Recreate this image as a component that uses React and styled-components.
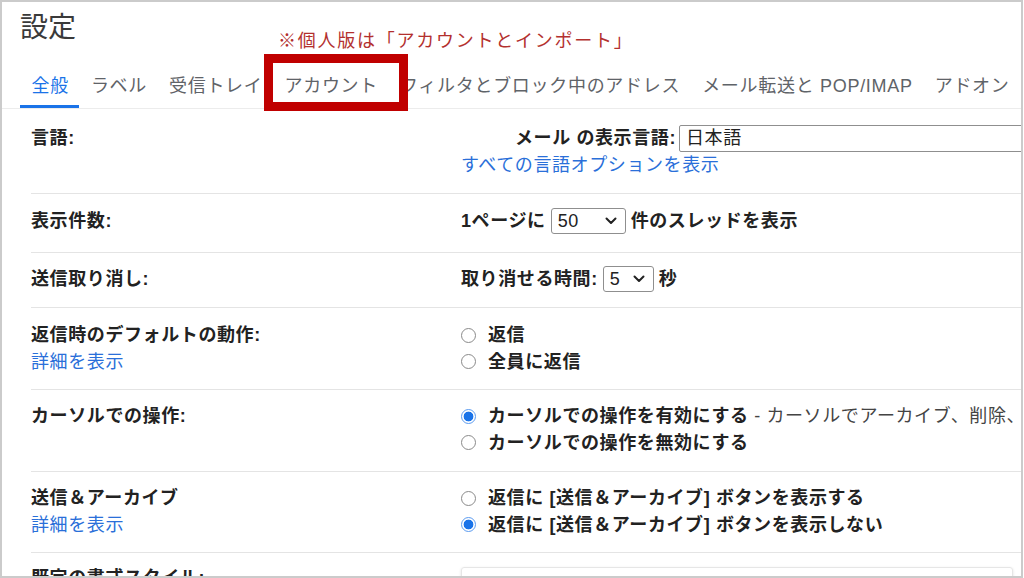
import React from "react";
import styled, { createGlobalStyle } from "styled-components";

const GlobalStyle = createGlobalStyle`
  html, body {
    margin: 0;
    background: #fff;
  }
  body {
    font-family: "Liberation Sans", "Noto Sans CJK JP", sans-serif;
    color: #222;
  }
`;

const Frame = styled.div`
  position: relative;
  width: 1023px;
  height: 578px;
  box-sizing: border-box;
  border: 2px solid #cbcbcb;
  overflow: hidden;
  background: #fff;
`;

const Title = styled.h1`
  margin: 0;
  height: 60px;
  box-sizing: border-box;
  padding: 9px 0 0 18px;
  font-size: 28px;
  line-height: 34px;
  font-weight: 400;
  color: #3a3a3a;
`;

const TabBar = styled.nav`
  display: flex;
  padding-left: 18px;
  border-bottom: 1px solid #ececec;
  white-space: nowrap;
`;

const Tab = styled.div`
  flex-shrink: 0;
  display: flex;
  align-items: center;
  height: 46px;
  box-sizing: border-box;
  padding: 0 10.5px 0 11.5px;
  border-bottom: 3px solid ${(p) => (p.$active ? "#1a73e8" : "transparent")};
  font-size: 18px;
  letter-spacing: 0.7px;
  color: ${(p) => (p.$active ? "#1a73e8" : "#5f6368")};
`;

const Settings = styled.div`
  margin-left: 29px;
`;

const Row = styled.div`
  display: grid;
  grid-template-columns: 430px 1fr;
  padding: ${(p) => p.$top}px 0 ${(p) => p.$bottom}px;
  border-bottom: 1px solid #e4e4e4;
  font-size: 18px;
  line-height: 26.5px;
  letter-spacing: 0.6px;
  white-space: nowrap;
`;

const Label = styled.div`
  font-weight: 700;
  color: #222;
`;

const Value = styled.div`
  font-weight: 700;
  color: #222;
`;

const Link = styled.div`
  font-weight: 400;
  color: #2a6fd9;
`;

const Line = styled.div`
  display: flex;
  align-items: center;
  gap: ${(p) => p.$gap || 0}px;
  height: ${(p) => p.$h || 26.5}px;
`;

const LangLabel = styled.span`
  width: 215px;
  margin-right: 3px;
  text-align: right;
`;

const TextBox = styled.div`
  width: 420px;
  height: 27px;
  box-sizing: border-box;
  border: 1px solid #8f8f8f;
  border-radius: 2px;
  padding: 0 6px;
  font-weight: 400;
  line-height: 25px;
  flex-shrink: 0;
`;

const SelectBox = styled.div`
  display: inline-flex;
  align-items: center;
  justify-content: space-between;
  width: ${(p) => p.$w}px;
  height: 26px;
  box-sizing: border-box;
  border: 1px solid #8f8f8f;
  border-radius: 3px;
  padding: 0 8px 0 6px;
  font-weight: 400;
  color: #222;
  svg {
    display: block;
  }
`;

const Radio = styled.span`
  flex-shrink: 0;
  width: 15px;
  height: 15px;
  box-sizing: border-box;
  border-radius: 50%;
  margin-right: 12px;
  border: ${(p) => (p.$checked ? "1.5px solid #5b9bf0" : "1px solid #8a8a8a")};
  background: ${(p) =>
    p.$checked
      ? "radial-gradient(circle, #1a73e8 0 4.6px, #fff 5.2px)"
      : "#fff"};
`;

const Note = styled.span`
  font-weight: 400;
  color: #444;
`;

const Preview = styled.div`
  width: 550px;
  height: 40px;
  margin-top: 2px;
  border: 1px solid #e6e6e6;
  border-radius: 3px;
  box-shadow: 0 1px 3px rgba(0, 0, 0, 0.12);
`;

const Annotation = styled.div`
  position: absolute;
  left: 276px;
  top: 27px;
  font-size: 18px;
  line-height: 24px;
  letter-spacing: 1.75px;
  color: #b3302e;
  white-space: nowrap;
`;

const Highlight = styled.div`
  position: absolute;
  left: 262px;
  top: 52px;
  width: 144px;
  height: 57px;
  box-sizing: border-box;
  border: 9px solid #c00000;
`;

const Chevron = () => (
  <svg width="12" height="8" viewBox="0 0 12 8">
    <path d="M1.5 1.5 L6 6 L10.5 1.5" fill="none" stroke="#222" strokeWidth="2" strokeLinecap="round" strokeLinejoin="round" />
  </svg>
);

const Select = ({ value, width }) => (
  <SelectBox $w={width}>
    <span>{value}</span>
    <Chevron />
  </SelectBox>
);

const Option = ({ checked, children }) => (
  <Line>
    <Radio $checked={checked} />
    <span>{children}</span>
  </Line>
);

const tabs = [
  "全般",
  "ラベル",
  "受信トレイ",
  "アカウント",
  "フィルタとブロック中のアドレス",
  "メール転送と POP/IMAP",
  "アドオン",
];

export default function App() {
  return (
    <>
      <GlobalStyle />
      <Frame>
        <Title>設定</Title>
        <TabBar>
          {tabs.map((t, i) => (
            <Tab key={t} $active={i === 0}>
              {t}
            </Tab>
          ))}
        </TabBar>

        <Settings>
          <Row $top={16} $bottom={14}>
            <Label>言語:</Label>
            <Value>
              <Line $h={27}>
                <LangLabel>メール の表示言語:</LangLabel>
                <TextBox>日本語</TextBox>
              </Line>
              <Link>すべての言語オプションを表示</Link>
            </Value>
          </Row>

          <Row $top={14} $bottom={18}>
            <Label>表示件数:</Label>
            <Value>
              <Line $gap={5}>
                <span>1ページに</span>
                <Select value="50" width={75} />
                <span>件のスレッドを表示</span>
              </Line>
            </Value>
          </Row>

          <Row $top={13} $bottom={14.5}>
            <Label>送信取り消し:</Label>
            <Value>
              <Line $gap={5}>
                <span>取り消せる時間:</span>
                <Select value="5" width={51} />
                <span>秒</span>
              </Line>
            </Value>
          </Row>

          <Row $top={14} $bottom={14}>
            <Label>
              返信時のデフォルトの動作:
              <Link>詳細を表示</Link>
            </Label>
            <Value>
              <Option>返信</Option>
              <Option>全員に返信</Option>
            </Value>
          </Row>

          <Row $top={13} $bottom={15}>
            <Label>カーソルでの操作:</Label>
            <Value>
              <Option checked>
                カーソルでの操作を有効にする
                <Note> - カーソルでアーカイブ、削除、既読にする、ミュートにする操作を行えます</Note>
              </Option>
              <Option>カーソルでの操作を無効にする</Option>
            </Value>
          </Row>

          <Row $top={13} $bottom={14}>
            <Label>
              送信＆アーカイブ
              <Link>詳細を表示</Link>
            </Label>
            <Value>
              <Option>返信に [送信＆アーカイブ] ボタンを表示する</Option>
              <Option checked>返信に [送信＆アーカイブ] ボタンを表示しない</Option>
            </Value>
          </Row>

          <Row $top={12} $bottom={16}>
            <Label>既定の書式スタイル:</Label>
            <Value>
              <Preview />
            </Value>
          </Row>
        </Settings>

        <Annotation>※個人版は「アカウントとインポート」</Annotation>
        <Highlight />
      </Frame>
    </>
  );
}
